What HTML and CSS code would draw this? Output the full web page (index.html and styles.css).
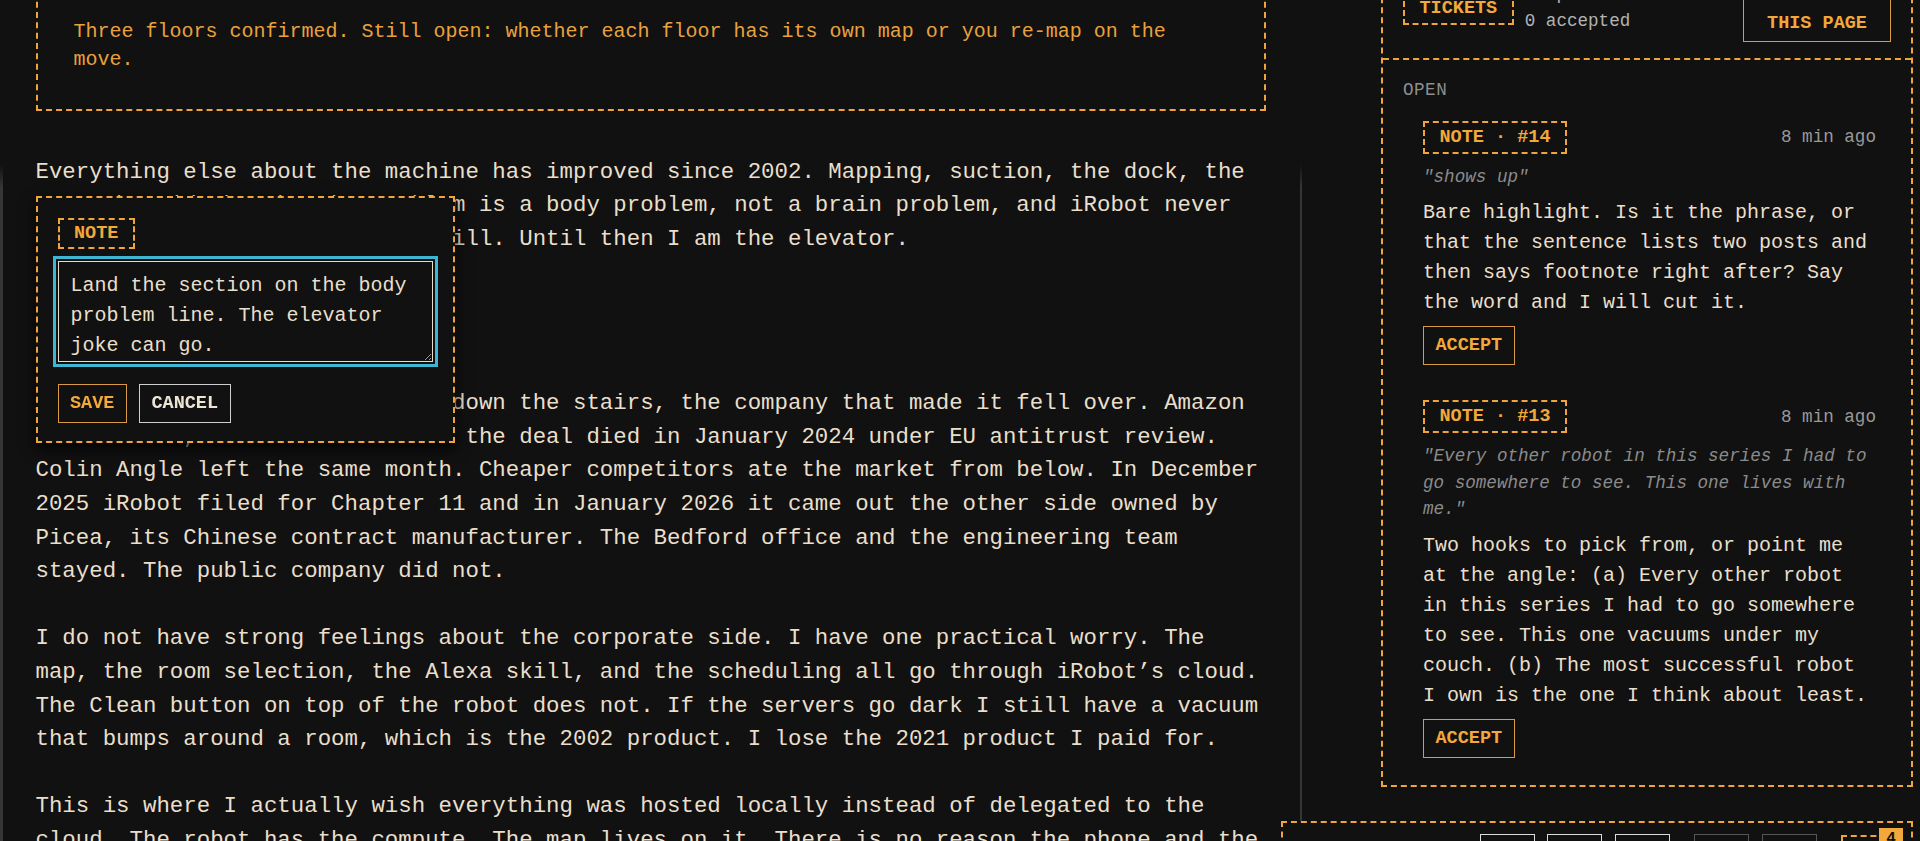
FILE: index.html
```html
<!DOCTYPE html>
<html lang="en">
<head>
<meta charset="utf-8">
<title>Draft — the robot that does not climb stairs</title>
<link rel="stylesheet" href="styles.css">
</head>
<body>
<div class="page">
  <main class="article">
    <div class="callout">
      <p>Three floors confirmed. Still open: whether each floor has its own map or you re-map on the move.</p>
    </div>

    <p class="lead">Everything else about the machine has improved since 2002. Mapping, suction, the dock, the app, the side brush. The problem is a body problem, not a brain problem, and iRobot never solved it. Maybe someone else will. Until then I am the elevator.</p>

    <p class="after-break">Around the time mine was going down the stairs, the company that made it fell over. Amazon bid in 2022, and after all that the deal died in January 2024 under EU antitrust review. Colin Angle left the same month. Cheaper competitors ate the market from below. In December 2025 iRobot filed for Chapter 11 and in January 2026 it came out the other side owned by Picea, its Chinese contract manufacturer. The Bedford office and the engineering team stayed. The public company did not.</p>

    <p>I do not have strong feelings about the corporate side. I have one practical worry. The map, the room selection, the Alexa skill, and the scheduling all go through iRobot’s cloud. The Clean button on top of the robot does not. If the servers go dark I still have a vacuum that bumps around a room, which is the 2002 product. I lose the 2021 product I paid for.</p>

    <p>This is where I actually wish everything was hosted locally instead of delegated to the cloud. The robot has the compute. The map lives on it. There is no reason the phone and the robot could not talk to each other over my own network.</p>

    <div class="note-popup">
      <span class="tag tag-sm">NOTE</span>
      <textarea class="note-input" rows="3">Land the section on the body problem line. The elevator joke can go.</textarea>
      <div class="actions">
        <button class="btn btn-orange">SAVE</button>
        <button class="btn btn-light">CANCEL</button>
      </div>
    </div>
  </main>

  <aside class="sidebar">
    <section class="panel">
      <header class="panel-head">
        <span class="tag">TICKETS</span>
        <div class="counts">
          <span>1 open · 0 stretch</span>
          <span>0 accepted</span>
        </div>
        <button class="btn btn-orange btn-wide">NOTE ON THIS PAGE</button>
      </header>
      <div class="panel-body">
        <div class="section-label">OPEN</div>

        <article class="card">
          <div class="card-head">
            <span class="tag">NOTE · #14</span>
            <span class="time">8 min ago</span>
          </div>
          <p class="quote">"shows up"</p>
          <p class="card-text">Bare highlight. Is it the phrase, or that the sentence lists two posts and then says footnote right after? Say the word and I will cut it.</p>
          <button class="btn btn-orange">ACCEPT</button>
        </article>

        <article class="card">
          <div class="card-head">
            <span class="tag">NOTE · #13</span>
            <span class="time">8 min ago</span>
          </div>
          <p class="quote">"Every other robot in this series I had to go somewhere to see. This one lives with me."</p>
          <p class="card-text">Two hooks to pick from, or point me at the angle: (a) Every other robot in this series I had to go somewhere to see. This one vacuums under my couch. (b) The most successful robot I own is the one I think about least.</p>
          <button class="btn btn-orange">ACCEPT</button>
        </article>
      </div>
    </section>
  </aside>
</div>

<nav class="toolbar">
  <span class="tb-btn"></span>
  <span class="tb-btn"></span>
  <span class="tb-btn"></span>
  <span class="tb-btn dim group-start"></span>
  <span class="tb-btn dim"></span>
  <span class="tb-tag group-start"><span class="badge">4</span></span>
</nav>
<script src="script.js"></script>
</body>
</html>
```

FILE: styles.css
```css
* { box-sizing: border-box; }

html, body {
  margin: 0;
  padding: 0;
  background: #111111;
}

body {
  font-family: "Liberation Mono", "DejaVu Sans Mono", monospace;
  color: #e9dfcb;
  height: 841px;
  overflow: hidden;
}

.page {
  display: grid;
  grid-template-columns: 1302px 532px;
  column-gap: 79px;
  align-items: start;
  margin-top: -50px;
}

/* ---------- article ---------- */
.article {
  position: relative;
  border-style: solid;
  border-width: 0 2px 0 3px;
  border-image: linear-gradient(to bottom, rgba(58, 58, 58, 0) 0, rgba(58, 58, 58, 0) 215px, #363636 238px, #363636 100%) 1;
  padding: 30.5px 34.5px 200px 32.5px;
  font-size: 22.4px;
  line-height: 33.6px;
}

.article p {
  margin: 33.6px 0 0;
}

.callout {
  border: 2px dashed #f0a43c;
  padding: 35px 50px 35px 36px;
  color: #e9a13e;
  font-size: 20px;
  line-height: 28px;
}

.article .callout p { margin: 0; }

.article .lead { margin-top: 45px; }
.article .after-break { margin-top: 131px; }

/* ---------- tags & buttons ---------- */
.tag {
  display: inline-block;
  border: 2px dashed #f0a43c;
  color: #f2a83b;
  font-weight: 700;
  font-size: 18.5px;
  line-height: 25px;
  padding: 2px 14.5px;
  white-space: nowrap;
}

.tag-sm { line-height: 23px; }

.btn {
  font-family: inherit;
  font-weight: 700;
  font-size: 18.5px;
  line-height: 37px;
  padding: 0 11.5px;
  background: transparent;
  border: 1.5px solid;
  cursor: pointer;
}

.btn-orange { color: #f2a83b; border-color: #d99a45; }
.btn-light { color: #ece4d4; border-color: #cfcfcf; }

.btn-wide {
  width: 148px;
  flex: none;
  line-height: 28px;
  padding: 6px 18px 3px;
  white-space: normal;
  text-align: center;
}

/* ---------- note popup ---------- */
.note-popup {
  position: absolute;
  left: 32.5px;
  top: 246px;
  width: 419px;
  display: flex;
  flex-direction: column;
  align-items: flex-start;
  background: #111111;
  border: 2px dashed #f0a43c;
  padding: 20px 20px 18px;
  box-shadow: 0 6px 14px rgba(0, 0, 0, 0.8);
}

.note-input {
  display: block;
  align-self: stretch;
  margin-top: 12px;
  width: 100%;
  height: 101px;
  background: #111111;
  color: #e9dfcb;
  caret-color: #e9dfcb;
  border: 1px solid #e6dccb;
  outline: 3px solid #3db5d3;
  outline-offset: 2px;
  padding: 9px 12px 0;
  font-family: "Liberation Mono", "DejaVu Sans Mono", monospace;
  font-size: 20px;
  line-height: 30px;
  overflow: hidden;
  resize: both;
}

.note-input:focus {
  outline: 3px solid #3db5d3;
  outline-offset: 2px;
}

.actions {
  display: flex;
  gap: 12px;
  margin-top: 22px;
}

/* ---------- sidebar ---------- */
.sidebar { padding-top: 6.5px; }

.panel { border: 2px dashed #f0a43c; }

.panel-head {
  display: flex;
  align-items: center;
  gap: 11px;
  padding: 16px 20px;
  border-bottom: 2px dashed #f0a43c;
}

.counts {
  flex: 1;
  display: flex;
  flex-direction: column;
  font-size: 17.6px;
  line-height: 27px;
  color: #b3b3b3;
}

.panel-body { padding: 17px 20px 27px; }

.section-label {
  font-size: 17.6px;
  line-height: 26px;
  color: #8e8e8e;
  letter-spacing: 0.5px;
  margin-bottom: 18px;
}

.card { margin: 0 15px 0 20px; }
.card + .card { margin-top: 35px; }

.card-head {
  display: flex;
  justify-content: space-between;
  align-items: center;
}

.time {
  font-size: 17.6px;
  color: #9a9a9a;
}

.quote {
  margin: 10px 0 0;
  font-style: italic;
  font-size: 17.6px;
  line-height: 26.6px;
  color: #8b8b8b;
}

.card-text {
  margin: 8px 0 0;
  font-size: 20px;
  line-height: 30px;
}

.card .btn { margin-top: 8px; }

/* ---------- bottom toolbar ---------- */
.toolbar {
  position: fixed;
  left: 1281px;
  top: 821px;
  width: 632px;
  height: 80px;
  background: #111111;
  border: 2px dashed #f0a43c;
  display: flex;
  justify-content: flex-end;
  align-items: flex-start;
  gap: 12.5px;
  padding: 11px 15px 0 0;
}

.tb-btn {
  width: 55px;
  height: 40px;
  border: 1.5px solid #dcdcdc;
}

.tb-btn.dim { border-color: #555555; }

.group-start { margin-left: 12px; }

.tb-tag {
  position: relative;
  width: 55px;
  height: 40px;
  margin-top: 1px;
  border: 2px dashed #f0a43c;
}

.badge {
  position: absolute;
  top: -9px;
  right: -9px;
  width: 24px;
  height: 22px;
  background: #f2a83b;
  color: #111111;
  font-weight: 700;
  font-size: 16px;
  line-height: 22px;
  text-align: center;
}
```

FILE: script.js
```js
(function () {
  var input = document.querySelector('.note-input');
  if (!input) return;
  input.focus({ preventScroll: true });
  var end = input.value.length;
  input.setSelectionRange(end, end);
})();
```
